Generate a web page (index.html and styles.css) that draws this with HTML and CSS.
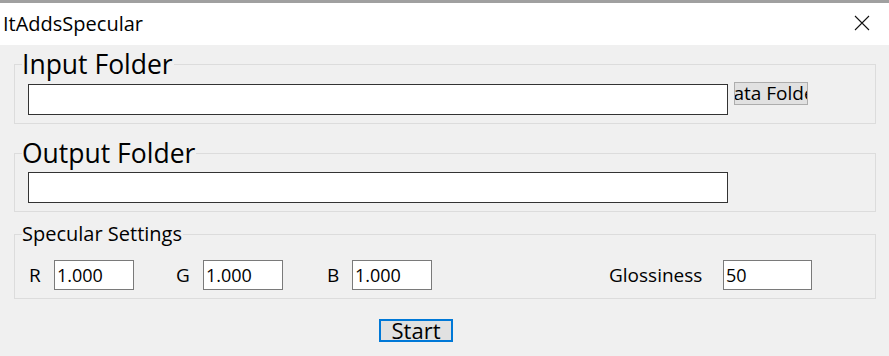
FILE: index.html
```html
<!DOCTYPE html>
<html lang="en">
<head>
<meta charset="UTF-8">
<title>ItAddsSpecular</title>
<link rel="stylesheet" href="styles.css">
</head>
<body>
<div class="window">
    <div class="titlebar">
        <span class="title">ItAddsSpecular</span>
        <svg class="close" width="16" height="16" viewBox="0 0 16 16">
            <path d="M1 1 L15 15 M15 1 L1 15" stroke="#111" stroke-width="1.1" fill="none"/>
        </svg>
    </div>
    <div class="client">
        <fieldset class="group input-group">
            <legend class="big-legend">Input Folder</legend>
            <div class="folder-row first">
                <input type="text" class="path-input">
                <button class="browse"><span>Data Folder</span></button>
            </div>
        </fieldset>
        <fieldset class="group output-group">
            <legend class="big-legend">Output Folder</legend>
            <div class="folder-row">
                <input type="text" class="path-input">
            </div>
        </fieldset>
        <fieldset class="group spec-group">
            <legend class="small-legend">Specular Settings</legend>
            <div class="spec-row">
                <label class="chan">R</label><input type="text" class="num" value="1.000">
                <label class="chan g">G</label><input type="text" class="num" value="1.000">
                <label class="chan b">B</label><input type="text" class="num" value="1.000">
                <label class="gloss">Glossiness</label><input type="text" class="num wide" value="50">
            </div>
        </fieldset>
        <div class="actions">
            <button class="start">Start</button>
        </div>
    </div>
</div>
</body>
</html>
```

FILE: styles.css
```css
body {
    margin: 0;
    background-color: #f0f0f0;
    font-family: "Open Sans", "Noto Sans", sans-serif;
    color: #000;
}

.window {
    width: 889px;
    height: 356px;
    overflow: hidden;
}

.titlebar {
    height: 42px;
    background-color: #fff;
    border-top: 3px solid #a0a0a0;
    display: flex;
    align-items: center;
    justify-content: space-between;
    padding: 0 19px 0 3px;
}

.title {
    font-size: 20px;
    margin-top: -1px;
}

.close {
    margin-top: -2px;
}

.client {
    padding: 0 13px 0 14px;
}

.group {
    border: 1px solid #dcdcdc;
    margin: 0;
    padding: 0;
    min-width: 0;
    box-sizing: border-box;
}

.input-group {
    height: 75px;
    margin-top: 4px;
}

.output-group {
    height: 74px;
    margin-top: 14px;
}

.big-legend {
    font-size: 26.5px;
    line-height: 30px;
    padding: 0 1px 0 0;
    margin-left: 7px;
}

.folder-row {
    display: flex;
    align-items: flex-start;
    margin-top: 4px;
    padding-left: 13px;
}

.folder-row.first {
    margin-top: 5px;
}

.path-input {
    width: 700px;
    height: 31px;
    box-sizing: border-box;
    border: 1px solid #333;
    background-color: #fff;
    margin: 0;
}

.browse {
    width: 74px;
    height: 23px;
    margin: -2px 0 0 6px;
    padding: 0;
    border: 1px solid #adadad;
    background-color: #e1e1e1;
    font-family: inherit;
    font-size: 19px;
    line-height: 21px;
    display: flex;
    justify-content: center;
    align-items: center;
    overflow: hidden;
}

.browse span {
    white-space: nowrap;
}

.spec-group {
    height: 76px;
    margin-top: 11px;
}

.small-legend {
    font-size: 20px;
    line-height: 22px;
    padding: 0 1px 0 0;
    margin-left: 7px;
}

.spec-row {
    display: flex;
    align-items: center;
    margin-top: 15px;
    padding-left: 14px;
    font-size: 19px;
}

.chan {
    width: 25px;
}

.chan.g {
    margin-left: 42px;
    width: 27px;
}

.chan.b {
    margin-left: 44px;
    width: 25px;
}

.gloss {
    margin-left: 177px;
    width: 114px;
}

.num {
    width: 80px;
    height: 30px;
    box-sizing: border-box;
    border: 1px solid #7a7a7a;
    background-color: #fff;
    font-family: inherit;
    font-size: 18px;
    padding: 0 0 0 2px;
    margin: 0;
}

.num.wide {
    width: 89px;
}

.actions {
    padding-left: 365px;
    margin-top: 20px;
}

.start {
    width: 74px;
    height: 23px;
    border: 2px solid #0078d7;
    background-color: #e1e1e1;
    font-family: inherit;
    font-size: 22px;
    line-height: 19px;
    padding: 0;
}
```
